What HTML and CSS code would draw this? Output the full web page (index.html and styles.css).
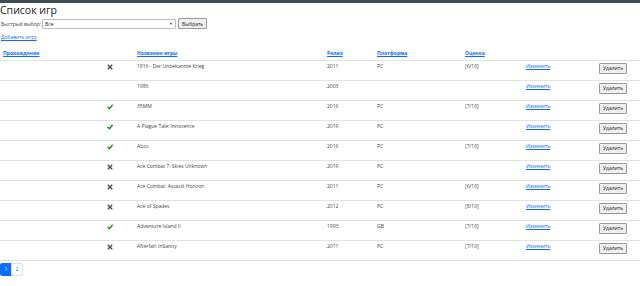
FILE: index.html
```html
<!DOCTYPE html>
<html lang="ru">
<head>
  <meta charset="UTF-8">
  <title>Список игр</title>
  <link rel="stylesheet" href="styles.css">
</head>
<body>
  <div class="topbar"></div>
  <div class="page">
    <h1>Список игр</h1>
    <form class="quick">
      <label>Быстрый выбор:</label>
      <span class="select-wrap"><select class="quick-select"><option>Все</option></select></span>
      <button type="button" class="btn">Выбрать</button>
    </form>
    <a href="#" class="add">Добавить игру</a>

    <table class="games">
      <thead>
        <tr>
          <th class="c-done"><a href="#">Прохождение</a></th>
          <th class="c-icon"></th>
          <th class="c-name"><a href="#">Название игры</a></th>
          <th class="c-year"><a href="#">Релиз</a></th>
          <th class="c-plat"><a href="#">Платформа</a></th>
          <th class="c-rate"><a href="#">Оценка</a></th>
          <th class="c-edit"></th>
          <th class="c-del"></th>
        </tr>
      </thead>
      <tbody>
        <tr><td></td><td class="ic"><svg class="no" viewBox="0 0 10 10"><path d="M2 2 L8 8 M8 2 L2 8"/></svg></td><td>1916 - Der Unbekannte Krieg</td><td>2011</td><td>PC</td><td>[6/10]</td><td><a href="#">Изменить</a></td><td><button class="btn">Удалить</button></td></tr>
        <tr><td></td><td class="ic"></td><td>198X</td><td>2003</td><td></td><td></td><td><a href="#">Изменить</a></td><td><button class="btn">Удалить</button></td></tr>
        <tr><td></td><td class="ic"><svg class="yes" viewBox="0 0 10 10"><path d="M1.5 5.5 L4 8 L8.8 2"/></svg></td><td>35MM</td><td>2016</td><td>PC</td><td>[7/10]</td><td><a href="#">Изменить</a></td><td><button class="btn">Удалить</button></td></tr>
        <tr><td></td><td class="ic"><svg class="yes" viewBox="0 0 10 10"><path d="M1.5 5.5 L4 8 L8.8 2"/></svg></td><td>A Plague Tale: Innocence</td><td>2019</td><td>PC</td><td></td><td><a href="#">Изменить</a></td><td><button class="btn">Удалить</button></td></tr>
        <tr><td></td><td class="ic"><svg class="yes" viewBox="0 0 10 10"><path d="M1.5 5.5 L4 8 L8.8 2"/></svg></td><td>Abzu</td><td>2016</td><td>PC</td><td>[7/10]</td><td><a href="#">Изменить</a></td><td><button class="btn">Удалить</button></td></tr>
        <tr><td></td><td class="ic"><svg class="no" viewBox="0 0 10 10"><path d="M2 2 L8 8 M8 2 L2 8"/></svg></td><td>Ace Combat 7: Skies Unknown</td><td>2019</td><td>PC</td><td></td><td><a href="#">Изменить</a></td><td><button class="btn">Удалить</button></td></tr>
        <tr><td></td><td class="ic"><svg class="no" viewBox="0 0 10 10"><path d="M2 2 L8 8 M8 2 L2 8"/></svg></td><td>Ace Combat: Assault Horizon</td><td>2011</td><td>PC</td><td>[6/10]</td><td><a href="#">Изменить</a></td><td><button class="btn">Удалить</button></td></tr>
        <tr><td></td><td class="ic"><svg class="no" viewBox="0 0 10 10"><path d="M2 2 L8 8 M8 2 L2 8"/></svg></td><td>Ace of Spades</td><td>2012</td><td>PC</td><td>[8/10]</td><td><a href="#">Изменить</a></td><td><button class="btn">Удалить</button></td></tr>
        <tr><td></td><td class="ic"><svg class="yes" viewBox="0 0 10 10"><path d="M1.5 5.5 L4 8 L8.8 2"/></svg></td><td>Adventure Island II</td><td>1993</td><td>GB</td><td>[7/10]</td><td><a href="#">Изменить</a></td><td><button class="btn">Удалить</button></td></tr>
        <tr><td></td><td class="ic"><svg class="no" viewBox="0 0 10 10"><path d="M2 2 L8 8 M8 2 L2 8"/></svg></td><td>Afterfall: InSanity</td><td>2011</td><td>PC</td><td>[7/10]</td><td><a href="#">Изменить</a></td><td><button class="btn">Удалить</button></td></tr>
      </tbody>
    </table>

    <ul class="pager">
      <li class="active"><a href="#">1</a></li>
      <li><a href="#">2</a></li>
    </ul>
  </div>
</body>
</html>
```

FILE: styles.css
```css
body {
  margin: 0;
  font-family: "Open Sans", "Noto Sans", sans-serif;
  font-size: 5px;
  color: #444;
  background-color: #fff;
}

a {
  color: #0d6efd;
  text-decoration: underline;
}

.topbar {
  height: 3px;
  background-color: #3e4c57;
}

h1 {
  margin: 0;
  height: 15px;
  line-height: 15px;
  font-size: 10.5px;
  font-weight: 500;
  color: #212529;
}

.quick {
  display: flex;
  align-items: center;
  height: 11px;
  margin: 0 0 0 1px;
}

.quick label {
  flex: none;
  margin-right: 1px;
  white-space: nowrap;
}

.select-wrap {
  position: relative;
  display: block;
}

.select-wrap::after {
  content: "";
  position: absolute;
  right: 4px;
  top: 4px;
  border-left: 1.5px solid transparent;
  border-right: 1.5px solid transparent;
  border-top: 2px solid #333;
}

.quick-select {
  display: block;
  appearance: none;
  width: 134px;
  height: 10px;
  padding: 0 0 0 2px;
  font: inherit;
  color: #222;
  border: 1px solid #bbb;
  border-radius: 1px;
  background: #fff;
}

.btn {
  font: inherit;
  color: #222;
  height: 11px;
  padding: 0 3px;
  background: #efefef;
  border: 1px solid #999;
  border-radius: 1px;
}

.quick .btn {
  margin-left: 2px;
}

.add {
  display: block;
  margin: 5px 0 0 1px;
  line-height: 7px;
}

.games {
  width: 100%;
  margin-top: 9px;
  border-collapse: collapse;
  table-layout: fixed;
}

.games th {
  text-align: left;
  font-weight: 700;
  height: 7px;
  padding: 0 0 3px 3px;
  vertical-align: bottom;
  line-height: 7px;
  border-bottom: 1px solid #dee2e6;
}

.games td {
  height: 19px;
  padding: 2px 0 0 3px;
  vertical-align: top;
  border-bottom: 1px solid #dee2e6;
  box-sizing: border-box;
  line-height: 7px;
  white-space: nowrap;
}

.games tbody tr {
  height: 20px;
}

.c-done { width: 99px; }
.c-icon { width: 29px; }
.c-name { width: 187px; }
.c-year { width: 47px; }
.c-plat { width: 85px; }
.c-rate { width: 58px; }
.c-edit { width: 70px; }

.games td.ic {
  padding-left: 5px;
}

.ic svg {
  display: block;
  width: 6px;
  height: 6px;
  margin-top: 1px;
  fill: none;
  stroke-linecap: round;
  stroke-linejoin: round;
}

.ic svg.no {
  stroke: #555;
  stroke-width: 2.6;
}

.ic svg.yes {
  stroke: #1e8c2c;
  stroke-width: 2.4;
}

.games td .btn {
  margin: 0;
  height: 11px;
}

.pager {
  display: flex;
  list-style: none;
  margin: 2px 0 0 0;
  padding: 0;
}

.pager li a {
  display: block;
  width: 10px;
  height: 11px;
  line-height: 11px;
  text-align: center;
  text-decoration: none;
  border: 1px solid #dee2e6;
  margin-left: -1px;
}

.pager li:first-child a {
  margin-left: 0;
  border-radius: 2px 0 0 2px;
}

.pager li:last-child a {
  border-radius: 0 2px 2px 0;
}

.pager li.active a {
  background: #0d6efd;
  border-color: #0d6efd;
  color: #fff;
}
```
